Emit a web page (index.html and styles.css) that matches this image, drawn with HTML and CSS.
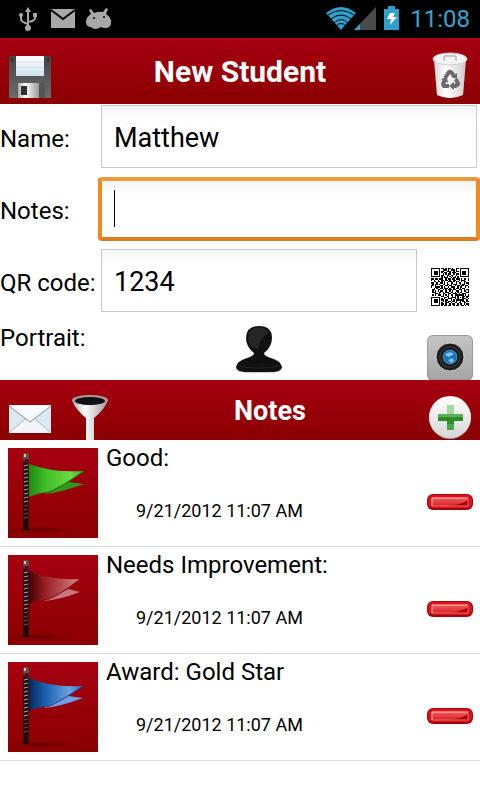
FILE: index.html
```html
<!DOCTYPE html>
<html lang="en">
	<head>
		<meta charset="UTF-8">
		<meta name="viewport" content="width=device-width, initial-scale=1">
		<link rel="stylesheet" href="styles.css">
		<title>New Student</title>
	</head>
	<body>
		<!-- shared gradients and the flag pole -->
		<svg class="defs" width="0" height="0" aria-hidden="true">
			<defs>
				<linearGradient id="metal" x1="0" x2="1" y1="0" y2="0">
					<stop offset="0" stop-color="#aaa"/><stop offset=".35" stop-color="#fff"/><stop offset="1" stop-color="#999"/>
				</linearGradient>
				<linearGradient id="dark" x1="0" x2="0" y1="0" y2="1">
					<stop offset="0" stop-color="#444"/><stop offset="1" stop-color="#6c6c6c"/>
				</linearGradient>
				<linearGradient id="paper" x1="0" x2="0" y1="0" y2="1">
					<stop offset="0" stop-color="#fff"/><stop offset="1" stop-color="#cfe3f1"/>
				</linearGradient>
				<linearGradient id="green" x1="0" x2="1" y1="0" y2="0">
					<stop offset="0" stop-color="#1c8a10"/><stop offset=".3" stop-color="#3fbe26"/><stop offset=".75" stop-color="#68d944"/><stop offset="1" stop-color="#3da92a"/>
				</linearGradient>
				<linearGradient id="red" x1="0" x2="1" y1="0" y2="0">
					<stop offset="0" stop-color="#430003"/><stop offset=".3" stop-color="#941d22"/><stop offset=".7" stop-color="#bd555a"/><stop offset="1" stop-color="#d58a8e"/>
				</linearGradient>
				<linearGradient id="blue" x1="0" x2="1" y1="0" y2="0">
					<stop offset="0" stop-color="#06275a"/><stop offset=".3" stop-color="#1761ae"/><stop offset=".75" stop-color="#6aa3e0"/><stop offset="1" stop-color="#3c66bd"/>
				</linearGradient>
				<radialGradient id="shadow">
					<stop offset="0" stop-color="#300" stop-opacity=".5"/><stop offset="1" stop-color="#300" stop-opacity="0"/>
				</radialGradient>
				<linearGradient id="minusRed" x1="0" x2="0" y1="0" y2="1">
					<stop offset="0" stop-color="#ef5a5a"/><stop offset="1" stop-color="#d8242a"/>
				</linearGradient>
				<linearGradient id="case" x1="0" x2="0" y1="0" y2="1">
					<stop offset="0" stop-color="#c4c4c4"/><stop offset="1" stop-color="#a6a6a6"/>
				</linearGradient>
				<linearGradient id="ball" x1="0" x2="0" y1="0" y2="1">
					<stop offset="0" stop-color="#fff"/><stop offset="1" stop-color="#d6d6d6"/>
				</linearGradient>
			</defs>
			<symbol id="pole" viewBox="0 0 90 90">
				<ellipse cx="32" cy="82" rx="34" ry="3" fill="url(#shadow)"/>
				<path d="M18 14V82" stroke="#111" stroke-width="5"/>
				<path d="M16 18l4-1M16 22l4-1M16 26l4-1M16 30l4-1M16 34l4-1M16 38l4-1M16 42l4-1M16 46l4-1M16 50l4-1M16 54l4-1" stroke="#aaa"/>
				<path d="M16 58l4-1M16 62l4-1M16 66l4-1M16 70l4-1" stroke="#555"/>
				<rect x="15" y="5" width="6" height="7" rx="2" fill="#5b5142"/>
				<path d="M16 6h2v3h-2z" fill="#cbc3b5"/>
				<path d="M17 11h3v5h-3z" fill="#222"/>
			</symbol>
			<symbol id="minus" viewBox="0 0 60 72">
				<rect x="7" y="28" width="46" height="16" rx="6" fill="#a5050b"/>
				<rect x="8" y="29" width="44" height="13" rx="5" fill="#d8141a"/>
				<rect x="12" y="32" width="36" height="8" rx="1" fill="url(#minusRed)"/>
				<path d="M27 40Q42 39 48 34V40Z" fill="#a80008"/>
				<path d="M12 40V32H48" fill="none" stroke="#ffc4c4"/>
				<path d="M12 40H48V33" fill="none" stroke="#ef6a6a"/>
			</symbol>
		</svg>

		<div class="statusbar">
			<svg class="status-left" width="120" height="38" aria-hidden="true">
				<g fill="none" stroke="#a8a8a8" stroke-width="2">
					<path d="M28 11V27M21 16v3q0 3 7 5M35 16v2q0 3-7 4"/>
				</g>
				<g fill="#a8a8a8">
					<path d="M28 7l3 5h-6z"/>
					<circle cx="28" cy="28" r="3"/>
					<circle cx="21" cy="15" r="2"/>
					<path d="M33 13h4v4h-4z"/>
					<path d="M51 9h24v19H51z"/>
					<path d="M89 10l2-1 3 4q5-2 9-1l3-4 2 1-2 5q6 4 5 9 0 5-6 5-3 0-4-1-3 2-6 2-2 0-4-2-5 0-5-5 0-5 5-8z"/>
				</g>
				<path d="M51 10l12 9 12-9" fill="none" stroke="#000" stroke-width="2"/>
				<circle cx="94" cy="18" r="1" fill="#000"/>
				<circle cx="104" cy="17" r="1" fill="#000"/>
			</svg>
			<svg class="status-right" width="80" height="38" aria-hidden="true">
				<path d="M2 13Q17 1 32 13L17 30z" fill="#2f9fcb"/>
				<g fill="none" stroke="#000">
					<path d="M4 15Q17 6 30 15"/>
					<path d="M7 19Q17 11 27 19"/>
					<path d="M10 23Q17 16 24 23"/>
					<path d="M12 26Q17 21 22 26"/>
				</g>
				<path d="M52 7V30H30z" fill="#4a4a4a"/>
				<path d="M36 24V30H30z" fill="#2f9fcb"/>
				<path d="M60 9h4V6h7v3h4V30H60z" fill="#2f9fcb"/>
				<path d="M66 13h5l-2 4h4l-7 8 1-6h-4z" fill="#fff"/>
			</svg>
			<span class="clock">11:08</span>
		</div>

		<form class="student">
			<header class="bar">
				<button class="icon" type="button" aria-label="Save">
					<svg width="60" height="66">
						<rect x="9" y="18" width="42" height="42" rx="1" fill="url(#dark)"/>
						<path d="M11 20h2v4h-2zM47 20h2v4h-2z" fill="#333"/>
						<path d="M16 18h28v20H16z" fill="url(#paper)"/>
						<path d="M16 24h28M16 29h28M16 34h28" stroke="#d3e0ea"/>
						<path d="M17 45h28v15H17z" fill="#555"/>
						<path d="M18 45h21v15H18z" fill="url(#metal)"/>
						<path d="M21 48h6v9h-6z" fill="#333"/>
					</svg>
				</button>
				<h1>New Student</h1>
				<button class="icon" type="button" aria-label="Delete">
					<svg width="60" height="66">
						<path d="M14 21L17 57Q30 63 43 57L46 21z" fill="url(#metal)"/>
						<path d="M14 21L17 57Q30 63 43 57L46 21z" fill="#fff" opacity=".5"/>
						<ellipse cx="30" cy="21" rx="17" ry="6" fill="#f4f4f4" stroke="#ccc"/>
						<path d="M24 23v-5h12v5" fill="none" stroke="#999" stroke-width="1"/>
						<g fill="none" stroke="#6a6a6a" stroke-width="4">
							<path d="M25 40l4-6q2-1 5 4"/>
							<path d="M36 41l2 5q-1 2-5 2"/>
							<path d="M29 48h-5q-2-2 1-6"/>
						</g>
						<path d="M37 35v6l-6-2zM34 44v8l-5-4zM21 41l6-2 1 6z" fill="#6a6a6a"/>
					</svg>
				</button>
			</header>

			<div class="row">
				<label for="name">Name:</label>
				<input id="name" type="text" value="Matthew">
			</div>
			<div class="row">
				<label for="notes">Notes:</label>
				<div class="field">
					<input id="notes" class="active" type="text">
					<span class="caret"></span>
				</div>
			</div>
			<div class="row">
				<label for="code">QR code:</label>
				<input id="code" type="text" value="1234">
				<button class="icon" type="button" aria-label="Scan QR code">
					<svg id="qr" width="38" height="38" viewBox="0 0 29 29" shape-rendering="crispEdges"></svg>
				</button>
			</div>
			<div class="row portrait">
				<span class="label">Portrait:</span>
				<svg class="person" width="60" height="60" role="img" aria-label="Portrait">
					<ellipse cx="30" cy="51" rx="22" ry="2" fill="#ccc"/>
					<path d="M7 47Q8 41 18 38 25 36 25 33 17 27 17 18 17 6 30 6T43 18Q43 27 35 33 35 36 42 38 52 41 53 47 53 51 45 52H15Q7 51 7 47z" fill="#111"/>
					<path d="M19 18Q19 8 30 7 38 8 40 13 31 16 29 29 20 27 19 18z" fill="#262626"/>
					<path d="M9 46q20 4 42 0" fill="none" stroke="#222"/>
				</svg>
				<button class="icon" type="button" aria-label="Take picture">
					<svg width="60" height="60">
						<rect x="7" y="15" width="46" height="46" rx="6" fill="#999"/>
						<rect x="8" y="16" width="44" height="43" rx="5" fill="url(#case)"/>
						<circle cx="30" cy="37" r="14" fill="#1c1c1c" stroke="#ccc"/>
						<circle cx="30" cy="37" r="11" fill="#303030"/>
						<circle cx="30" cy="37" r="9" fill="#0a1118"/>
						<circle cx="30" cy="37" r="7" fill="#1a73b5" stroke="#5d92b8"/>
						<path d="M25 35q4-5 9-1l-5 3zM28 40l5-2 1 3-3 2z" fill="#7cc5ee"/>
					</svg>
				</button>
			</div>
		</form>

		<section class="notes">
			<header class="bar notes-bar">
				<button class="icon" type="button" aria-label="E-mail notes">
					<svg width="60" height="60">
						<rect x="9" y="25" width="42" height="28" fill="#f3f6f9"/>
						<path d="M9 26L27 39 9 52zM51 26L33 39 51 52z" fill="#dde8f3"/>
						<path d="M10 52L26 38M50 52L34 38" stroke="#a9b9c8" fill="none"/>
						<path d="M9 26L30 42 51 26" fill="#f7fafc" stroke="#7d93a9"/>
					</svg>
				</button>
				<button class="icon" type="button" aria-label="Filter notes">
					<svg width="60" height="60">
						<path d="M12 20Q15 29 26 38V60H34V38Q45 29 48 20z" fill="url(#metal)"/>
						<ellipse cx="30" cy="20" rx="18" ry="5" fill="#a99"/>
						<ellipse cx="30" cy="21" rx="15" ry="4" fill="#111"/>
					</svg>
				</button>
				<h2>Notes</h2>
				<button class="icon" type="button" aria-label="Add note">
					<svg width="60" height="60">
						<circle cx="30" cy="38" r="21" fill="#999"/>
						<circle cx="30" cy="37" r="21" fill="url(#ball)"/>
						<path d="M27 25h7v9h-7z" fill="#a5d6a0"/>
						<path d="M18 34H43v4H18z" fill="#5cb057"/>
						<path d="M18 37H43v4H34v9H27v-9H18z" fill="#2c8b2b"/>
						<path d="M27 44h7v6h-7z" fill="#4ba548"/>
					</svg>
				</button>
			</header>

			<ul class="list">
				<li>
					<svg class="flag" width="90" height="90" viewBox="0 0 90 90" aria-hidden="true">
						<path d="M36 46Q51 45 76 36L60 34z" fill="#2f9a20"/>
						<path d="M21 16Q45 25 76 23 52 40 39 44 30 45 21 49z" fill="url(#green)"/>
						<path d="M76 23Q52 40 39 45" fill="none" stroke="#1c6e12"/>
						<use href="#pole"/>
					</svg>
					<div class="text">
						<h3>Good:</h3>
						<time>9/21/2012 11:07 AM</time>
					</div>
					<button class="icon remove" type="button" aria-label="Remove note"><svg width="60" height="72"><use href="#minus"/></svg></button>
				</li>
				<li>
					<svg class="flag" width="90" height="90" viewBox="0 0 90 90" aria-hidden="true">
						<path d="M36 46Q51 45 72 37L60 34z" fill="#c8787c"/>
						<path d="M21 16Q45 26 72 24 52 40 39 44 30 45 21 49z" fill="url(#red)"/>
						<path d="M72 24Q52 40 39 45" fill="none" stroke="#7c1216"/>
						<use href="#pole"/>
					</svg>
					<div class="text">
						<h3>Needs Improvement:</h3>
						<time>9/21/2012 11:07 AM</time>
					</div>
					<button class="icon remove" type="button" aria-label="Remove note"><svg width="60" height="72"><use href="#minus"/></svg></button>
				</li>
				<li>
					<svg class="flag" width="90" height="90" viewBox="0 0 90 90" aria-hidden="true">
						<path d="M36 46Q51 45 75 36L60 34z" fill="#739fe4"/>
						<path d="M21 16Q45 26 75 24 52 40 39 44 30 45 21 49z" fill="url(#blue)"/>
						<path d="M75 24Q52 40 39 45" fill="none" stroke="#173d83"/>
						<use href="#pole"/>
					</svg>
					<div class="text">
						<h3>Award: Gold Star</h3>
						<time>9/21/2012 11:07 AM</time>
					</div>
					<button class="icon remove" type="button" aria-label="Remove note"><svg width="60" height="72"><use href="#minus"/></svg></button>
				</li>
			</ul>
		</section>
		<script src="qr.js"></script>
	</body>
</html>
```

FILE: styles.css
```css
* {
	box-sizing: border-box;
}

body {
	margin: 0;
	background: white;
	color: black;
	font-family: Roboto, sans-serif;
	font-size: 24px;
	line-height: 28px;
}

.defs {
	position: absolute;
}

svg {
	display: block;
}

.statusbar {
	display: flex;
	align-items: center;
	height: 38px;
	padding-right: 10px;
	background: black;
}

.status-right {
	margin-left: auto;
}

.clock {
	margin-left: 6px;
	color: #33a5d0;
}

.bar {
	display: grid;
	grid-template-columns: 60px 1fr 60px;
	align-items: center;
	height: 66px;
	background: linear-gradient(#a60011, #8a0000);
	color: white;
	text-align: center;
}

.notes-bar {
	grid-template-columns: 60px 60px 1fr 60px;
	height: 60px;
}

h1,
h2,
h3 {
	margin: 0;
	font-size: 30px;
	line-height: 36px;
}

h1,
h2 {
	padding-top: 2px;
}

h2 {
	font-size: 27px;
}

.icon {
	display: flex;
	flex: none;
	align-items: center;
	justify-content: center;
	width: 60px;
	margin: 0;
	padding: 0;
	border: 0;
	background: transparent;
	cursor: pointer;
}

.row {
	display: flex;
	align-items: flex-start;
	height: 72px;
}

.row label,
.row .label {
	flex: none;
	width: 98px;
	padding-top: 21px;
	white-space: nowrap;
}

.row .icon {
	height: 100%;
	padding-top: 6px;
}

input {
	flex: 1;
	min-width: 0;
	height: 63px;
	margin: 1px 3px 0;
	padding: 2px 12px 0;
	border: 1px solid #c9c9c9;
	background: linear-gradient(#f4f4f4, white 16px);
	color: black;
	font: 27px Roboto, sans-serif;
	outline: none;
}

.field {
	position: relative;
	flex: 1;
}

input.active {
	display: block;
	width: 100%;
	height: 64px;
	margin: 1px 0 0;
	border: 4px solid #f08a20;
	border-color: #e99b3c #f08a20 #e07c20;
	border-radius: 4px;
	caret-color: transparent;
}

.caret {
	position: absolute;
	top: 14px;
	left: 16px;
	width: 1px;
	height: 37px;
	background: black;
}

.row.portrait {
	height: 60px;
}

.portrait .label {
	padding-top: 4px;
}

.portrait .icon {
	padding-top: 0;
}

.person {
	margin: 0 auto;
}

.list {
	margin: 0;
	padding: 0;
	list-style: none;
}

.list li {
	display: flex;
	padding: 8px 0 8px 8px;
	border-bottom: 1px solid #d9d9d9;
}

.flag {
	flex: none;
	background: linear-gradient(#a60011, #8a0000);
}

.text {
	flex: 1;
	padding-left: 8px;
}

h3 {
	margin-top: -4px;
	font-size: 24px;
	line-height: 28px;
	font-weight: normal;
}

time {
	display: block;
	padding: 28px 0 0 30px;
	font-size: 18px;
	line-height: 22px;
}

.remove {
	align-self: flex-end;
}
```

FILE: qr.js
```js
// one string per row of modules
var rows = [
	"#######.##.#.##.#..##.#######",
	"#.....#..###.#.###.#..#.....#",
	"#.###.#.##..###..#.##.#.###.#",
	"#.###.#.#.##..#.###...#.###.#",
	"#.###.#..#.#.##..#.##.#.###.#",
	"#.....#.##..##.##..#..#.....#",
	"#######.#.#.#.#.#.#.#.#######",
	"........#.###..#.##.#........",
	"##.##.###..#.##.##.###.#.##.#",
	"#.#..#..##.##.#..##..#.###..#",
	"..##.##.#.#..###.#.##..#.##..",
	"##..#..##.#.#..##..#.##..#.##",
	".#.##.#..##.##.#.###..#.##..#",
	"##.#...##..##.##..#.##.##.##.",
	"#..####.#.#..#.###..#.##..#.#",
	"..#.#..##.###.#..#.##.#.##...",
	".##..##..#.#.###.##..###.#.##",
	".#.#.#.##..#..#.#..##..#.##.#",
	".###..##.#.###.##.#.#.##...##",
	"...##.#..##..##..###.#..###..",
	".#.#.###.#.#.#.##.#######.#.#",
	"........##..##..#.#.#...##.##",
	"#######...##.#.####.#.#.#..#.",
	"#.....#.#.#..###..#.#...###.#",
	"#.###.#.##.##..#.#.######..#.",
	"#.###.#..#.#.##.##.#..#.##.##",
	"#.###.#.#..###.#..##.##..##..",
	"#.....#.##.#..#.##..#.##.#.##",
	"#######.#.##.##..#.##..##.#.#"
];
var d = "";
for (var y = 0; y < rows.length; y++)
	for (var x = 0; x < rows[y].length; x++)
		if (rows[y][x] == "#")
			d += "M" + x + " " + y + "h1v1h-1z";
var path = document.createElementNS("http://www.w3.org/2000/svg", "path");
path.setAttribute("d", d);
document.getElementById("qr").appendChild(path);
```
